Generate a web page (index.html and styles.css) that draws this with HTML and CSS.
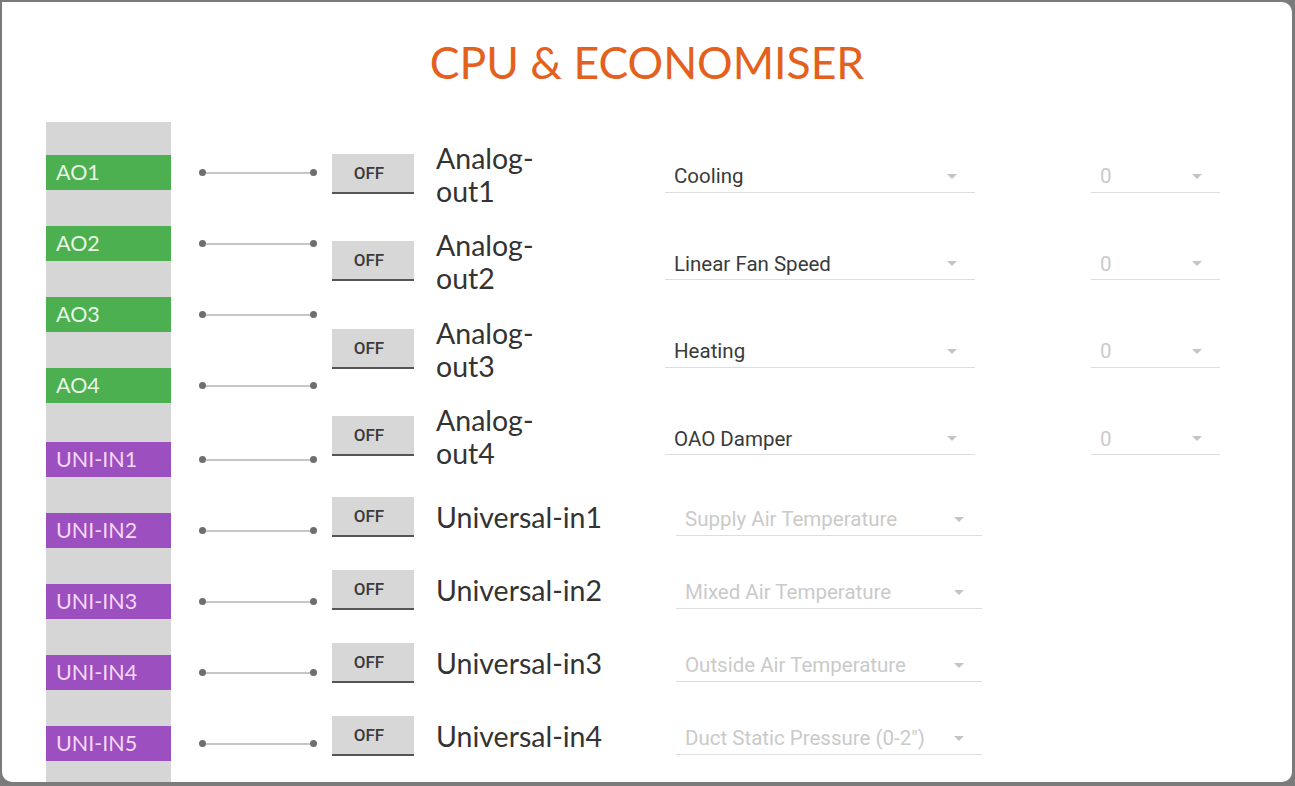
FILE: index.html
```html
<!DOCTYPE html>
<html lang="en">
<head>
    <meta charset="UTF-8">
    <meta name="viewport" content="width=device-width, initial-scale=1.0">
    <title>CPU &amp; Economiser</title>
    <link rel="stylesheet" href="styles.css">
</head>
<body>
    <div class="panel">
        <h1 class="title">CPU &amp; ECONOMISER</h1>

        <div class="board">
            <!-- terminal strip with wires -->
            <div class="pins">
                <div class="pin"><span class="tag tag-ao">AO1</span><span class="wire"><i></i><b></b><i></i></span></div>
                <div class="pin"><span class="tag tag-ao">AO2</span><span class="wire"><i></i><b></b><i></i></span></div>
                <div class="pin"><span class="tag tag-ao">AO3</span><span class="wire"><i></i><b></b><i></i></span></div>
                <div class="pin"><span class="tag tag-ao">AO4</span><span class="wire"><i></i><b></b><i></i></span></div>
                <div class="pin pin-first-uni"><span class="tag tag-uni">UNI-IN1</span><span class="wire"><i></i><b></b><i></i></span></div>
                <div class="pin"><span class="tag tag-uni">UNI-IN2</span><span class="wire"><i></i><b></b><i></i></span></div>
                <div class="pin"><span class="tag tag-uni">UNI-IN3</span><span class="wire"><i></i><b></b><i></i></span></div>
                <div class="pin"><span class="tag tag-uni">UNI-IN4</span><span class="wire"><i></i><b></b><i></i></span></div>
                <div class="pin"><span class="tag tag-uni">UNI-IN5</span><span class="wire"><i></i><b></b><i></i></span></div>
            </div>

            <!-- outputs / inputs config -->
            <div class="rows">
                <div class="row row-analog">
                    <button class="toggle">OFF</button>
                    <div class="name name-analog">Analog-out1</div>
                    <div class="select select-wide"><span>Cooling</span><em class="caret"></em></div>
                    <div class="select select-small disabled"><span>0</span><em class="caret"></em></div>
                </div>
                <div class="row row-analog">
                    <button class="toggle">OFF</button>
                    <div class="name name-analog">Analog-out2</div>
                    <div class="select select-wide"><span>Linear Fan Speed</span><em class="caret"></em></div>
                    <div class="select select-small disabled"><span>0</span><em class="caret"></em></div>
                </div>
                <div class="row row-analog">
                    <button class="toggle">OFF</button>
                    <div class="name name-analog">Analog-out3</div>
                    <div class="select select-wide"><span>Heating</span><em class="caret"></em></div>
                    <div class="select select-small disabled"><span>0</span><em class="caret"></em></div>
                </div>
                <div class="row row-analog">
                    <button class="toggle">OFF</button>
                    <div class="name name-analog">Analog-out4</div>
                    <div class="select select-wide"><span>OAO Damper</span><em class="caret"></em></div>
                    <div class="select select-small disabled"><span>0</span><em class="caret"></em></div>
                </div>
                <div class="row row-uni">
                    <button class="toggle">OFF</button>
                    <div class="name name-uni">Universal-in1</div>
                    <div class="select select-uni disabled"><span>Supply Air Temperature</span><em class="caret"></em></div>
                </div>
                <div class="row row-uni">
                    <button class="toggle">OFF</button>
                    <div class="name name-uni">Universal-in2</div>
                    <div class="select select-uni disabled"><span>Mixed Air Temperature</span><em class="caret"></em></div>
                </div>
                <div class="row row-uni">
                    <button class="toggle">OFF</button>
                    <div class="name name-uni">Universal-in3</div>
                    <div class="select select-uni disabled"><span>Outside Air Temperature</span><em class="caret"></em></div>
                </div>
                <div class="row row-uni">
                    <button class="toggle">OFF</button>
                    <div class="name name-uni">Universal-in4</div>
                    <div class="select select-uni disabled"><span>Duct Static Pressure (0-2")</span><em class="caret"></em></div>
                </div>
            </div>
        </div>
    </div>
</body>
</html>
```

FILE: styles.css
```css
body {
    margin: 0;
    background-color: #7b7b7b;
    font-family: Lato, "Open Sans", sans-serif;
}

.panel {
    background-color: #fff;
    height: 780px;
    margin: 2px 3px 4px 2px;
    border-radius: 0 10px 10px 10px;
    overflow: hidden;
}

.title {
    margin: 0;
    padding-top: 32px;
    font-size: 44.5px;
    font-weight: 400;
    line-height: 55px;
    text-align: center;
    color: #e3611d;
}

.board {
    display: flex;
    margin-top: 33px;
}

/* terminal strip */
.pins {
    display: flex;
    flex-direction: column;
    gap: 36px;
    width: 286px;
    margin-left: 44px;
    padding: 33px 0 60px;
    background: linear-gradient(#d6d6d6, #d6d6d6) no-repeat 0 0 / 125px 100%;
}

.pin {
    display: flex;
    align-items: center;
}

.pin-first-uni {
    margin-top: 3px;
}

.tag {
    width: 115px;
    height: 35px;
    line-height: 35px;
    padding-left: 10px;
    font-size: 21.5px;
}

.tag-ao {
    background-color: #4caf50;
    color: #e6f5e6;
}

.tag-uni {
    background-color: #9c4fbe;
    color: #f4d8f8;
}

.wire {
    display: flex;
    align-items: center;
    width: 118px;
    margin-left: 28px;
}

.wire i {
    width: 7px;
    height: 7px;
    border-radius: 50%;
    background-color: #6e6e6e;
}

.wire b {
    flex: 1;
    height: 2px;
    background-color: #c6c6c6;
}

/* config rows */
.rows {
    display: flex;
    flex-direction: column;
    padding-top: 9px;
}

.row {
    display: flex;
    align-items: center;
}

.row-analog {
    height: 87.5px;
}

.row-uni {
    height: 73px;
}

.toggle {
    width: 82px;
    height: 40px;
    margin-top: -2px;
    padding: 0 8px 0 0;
    border: none;
    border-bottom: 2px solid #555;
    background-color: #d7d7d7;
    font-family: Roboto, sans-serif;
    font-size: 17px;
    font-weight: 500;
    color: #3a3a3a;
}

.name {
    margin-left: 22px;
    font-size: 28.5px;
    line-height: 33px;
    color: #333;
}

.name-analog {
    width: 107px;
    margin-right: 122px;
}

.name-uni {
    width: 240px;
}

.select {
    display: flex;
    align-items: center;
    justify-content: space-between;
    height: 31px;
    margin-top: 4px;
    padding: 0 18px 0 9px;
    border-bottom: 1px solid #ddd;
    font-family: Roboto, sans-serif;
    font-size: 20.5px;
    color: #3a3a3a;
}

.select.disabled {
    color: #cacaca;
}

.select-wide {
    width: 283px;
}

.select-small {
    width: 102px;
    margin-left: 116px;
}

.select-uni {
    width: 279px;
}

.caret {
    width: 0;
    height: 0;
    border-left: 5px solid transparent;
    border-right: 5px solid transparent;
    border-top: 5px solid #c4c4c4;
}
```
